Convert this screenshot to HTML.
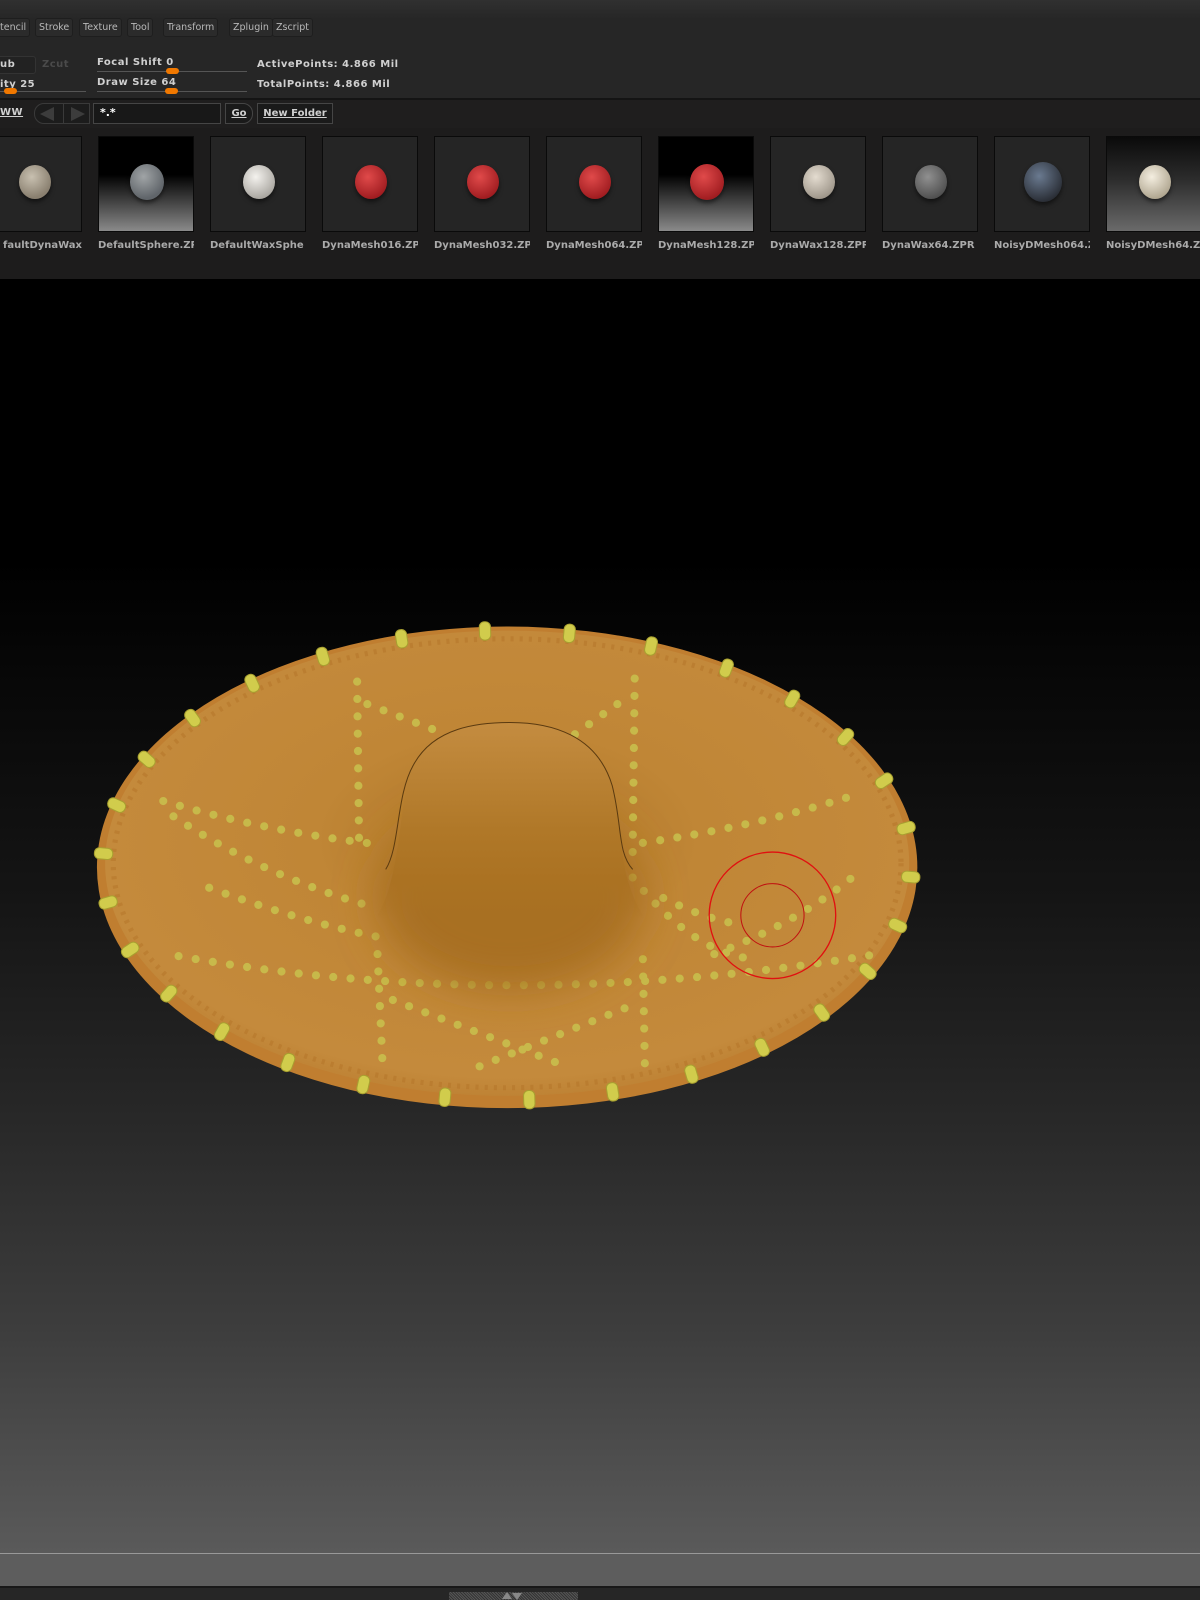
<!DOCTYPE html>
<html><head><meta charset="utf-8"><style>
*{margin:0;padding:0;box-sizing:border-box}
body{width:1200px;height:1600px;overflow:hidden;background:#000;font-family:"DejaVu Sans","Liberation Sans",sans-serif;position:relative}
.top{position:absolute;left:0;top:0;width:1200px;height:100px;background:linear-gradient(#303030,#262626 20%,#262626);border-bottom:2px solid #141414}
.menu{position:absolute;top:18px;height:19px;font-size:9.5px;color:#b8b8b8;background:#2b2b2b;border:1px solid #1e1e1e;border-radius:3px;padding:3px 3px;line-height:12px}
.lbl{position:absolute;font-size:10px;font-weight:bold;color:#d0d0d0;letter-spacing:.5px}
.slider{position:absolute;height:1px;background:#555}
.knob{position:absolute;width:13px;height:6px;background:#f07800;border-radius:3px}
.row2{position:absolute;left:0;top:100px;width:1200px;height:28px;background:#1f1e1e}
.btn{position:absolute;top:103px;height:21px;border:1px solid #454545;background:#1a1a1a;color:#cfcfcf;font-size:10px;font-weight:bold;line-height:19px;text-decoration:underline}
.thumbs{position:absolute;left:0;top:128px;width:1200px;height:151px;background:#1d1c1c}
.th{position:absolute;top:136px;width:96px;height:96px;border:1px solid #0a0a0a;background:#252525}
.th.g{background:linear-gradient(#000 40%,#8a8a8a)}
.th.g2{background:linear-gradient(#0a0a0a,#2c2c2c 45%,#6a6a6a)}
.ball{position:absolute;border-radius:50%}
.tl{position:absolute;top:240px;font-size:10px;font-weight:bold;color:#aaa;width:96px;overflow:hidden;white-space:nowrap;letter-spacing:0}
.vp{position:absolute;left:0;top:279px;width:1200px;height:1274px;background:linear-gradient(#000 0px,#000 280px,#151515 620px,#262626 820px,#3d3d3d 1050px,#5a5a5a 1274px)}
.bot{position:absolute;left:0;top:1553px;width:1200px;height:33px;background:#5d5d5d;border-top:1px solid #999}
.bar{position:absolute;left:0;top:1586px;width:1200px;height:14px;background:#262626;border-top:2px solid #181818}
</style></head><body>
<div class="top">
  <div class="menu" style="left:-4px">tencil</div>
  <div class="menu" style="left:35px">Stroke</div>
  <div class="menu" style="left:79px">Texture</div>
  <div class="menu" style="left:127px">Tool</div>
  <div class="menu" style="left:163px">Transform</div>
  <div class="menu" style="left:229px">Zplugin</div>
  <div class="menu" style="left:272px">Zscript</div>
  <div style="position:absolute;left:-4px;top:56px;width:40px;height:18px;border:1px solid #333;border-radius:3px;background:#222"></div>
  <div class="lbl" style="left:0;top:59px">ub</div>
  <div class="lbl" style="left:42px;top:59px;color:#4a4a4a">Zcut</div>
  <div class="lbl" style="left:0;top:79px">ity 25</div>
  <div class="slider" style="left:0;top:91px;width:86px"></div><div class="knob" style="left:4px;top:88px"></div>
  <div class="lbl" style="left:97px;top:57px">Focal Shift 0</div>
  <div class="slider" style="left:97px;top:71px;width:150px"></div><div class="knob" style="left:166px;top:68px"></div>
  <div class="lbl" style="left:97px;top:77px">Draw Size 64</div>
  <div class="slider" style="left:97px;top:91px;width:150px"></div><div class="knob" style="left:165px;top:88px"></div>
  <div class="lbl" style="left:257px;top:59px">ActivePoints: 4.866 Mil</div>
  <div class="lbl" style="left:257px;top:79px">TotalPoints: 4.866 Mil</div>
</div>
<div class="row2"></div>
<div class="lbl" style="left:0;top:107px;text-decoration:underline">WW</div>
<div style="position:absolute;left:34px;top:103px;width:56px;height:21px;border:1px solid #3a3a3a;border-radius:10px 0 0 10px;background:#1c1c1c"></div>
<div style="position:absolute;left:63px;top:103px;width:27px;height:21px;border:1px solid #3a3a3a;background:#1c1c1c"></div>
<div style="position:absolute;left:40px;top:107px;border-right:14px solid #3c3c3c;border-top:7px solid transparent;border-bottom:7px solid transparent"></div>
<div style="position:absolute;left:71px;top:107px;border-left:14px solid #3c3c3c;border-top:7px solid transparent;border-bottom:7px solid transparent"></div>
<div style="position:absolute;left:93px;top:103px;width:128px;height:21px;border:1px solid #454545;background:#181818;color:#fff;font-size:11px;font-weight:bold;padding:2px 6px">*.*</div>
<div class="btn" style="left:225px;width:28px;text-align:center;border-radius:0 10px 10px 0">Go</div>
<div class="btn" style="left:257px;width:76px;text-align:center">New Folder</div>
<div class="thumbs"></div>
<div id="th"></div>
<div class="vp"></div>
<svg style="position:absolute;left:0;top:0" width="1200" height="1600" viewBox="0 0 1176 1568">
<defs>
<radialGradient id="hat" cx="0.5" cy="0.45" r="0.6">
<stop offset="0" stop-color="#ad7526"/><stop offset="0.4" stop-color="#c08636"/><stop offset="0.85" stop-color="#c48a3c"/><stop offset="1" stop-color="#b87a2c"/>
</radialGradient>
<linearGradient id="dome" x1="0" y1="0" x2="0" y2="1">
<stop offset="0" stop-color="#c48c40"/><stop offset="0.55" stop-color="#b07828"/><stop offset="0.8" stop-color="#ab7222"/><stop offset="1" stop-color="#ab7222" stop-opacity="0"/>
</linearGradient>
<filter id="bl" x="-50%" y="-50%" width="200%" height="200%"><feGaussianBlur stdDeviation="20"/></filter>
</defs>
<ellipse cx="497" cy="850" rx="402" ry="236" fill="#c07e30"/>
<ellipse cx="497" cy="846" rx="394" ry="228" fill="url(#hat)"/>
<ellipse cx="497" cy="846" rx="386" ry="220" fill="none" stroke="#b47428" stroke-width="5" stroke-dasharray="3 6" opacity=".5"/>
<g fill="none" stroke="#c9c24e" stroke-width="8" stroke-linecap="round" stroke-dasharray="0 17" opacity=".85">
<path d="M350 668 L352 835"/>
<path d="M622 665 L620 835"/>
<path d="M360 690 L425 715"/>
<path d="M605 690 L560 722"/>
<path d="M160 785 Q260 815 375 828"/>
<path d="M630 826 Q740 810 835 780"/>
<path d="M170 800 Q260 860 370 890"/>
<path d="M205 870 Q300 905 380 920"/>
<path d="M175 937 Q500 995 860 935"/>
<path d="M370 935 L375 1045"/>
<path d="M630 940 L632 1045"/>
<path d="M385 980 L555 1045"/>
<path d="M470 1045 L620 985"/>
<path d="M650 880 Q690 900 720 905"/>
<path d="M700 935 Q780 905 835 860"/>
<path d="M620 860 Q680 935 740 940"/>
</g>
<ellipse cx="500" cy="880" rx="130" ry="90" fill="#a86f20" filter="url(#bl)"/>
<path d="M368 900 C395 860 390 780 405 750 C425 712 470 708 500 708 C540 708 585 720 600 770 C610 810 605 860 632 900 Z" fill="url(#dome)"/>
<path d="M378 852 C392 830 388 780 405 750 C425 712 470 708 500 708 C540 708 585 720 600 770 C610 810 605 835 620 852" fill="none" stroke="#5a3a10" stroke-width="1"/>
<g id="knobs" fill="#d1cc4c" stroke="#a8a030" stroke-width="1"></g>
<circle cx="757" cy="897" r="62" fill="none" stroke="#e01010" stroke-width="1.3"/>
<circle cx="757" cy="897" r="31" fill="none" stroke="#c01010" stroke-width="1"/>
</svg>
<div class="bot"></div>
<div class="bar"></div>
<div style="position:absolute;left:449px;top:1592px;width:129px;height:8px;background:repeating-linear-gradient(45deg,#555 0 1px,#333 1px 2px)"></div>
<div style="position:absolute;left:502px;top:1592px;border-bottom:7px solid #888;border-left:5px solid transparent;border-right:5px solid transparent"></div>
<div style="position:absolute;left:512px;top:1593px;border-top:7px solid #888;border-left:5px solid transparent;border-right:5px solid transparent"></div>
<script>
var th=[
["faultDynaWax","",'radial-gradient(circle at 40% 35%,#c8c0b0,#8a8070 70%)',32],
["DefaultSphere.ZPR","g",'radial-gradient(circle at 40% 35%,#a0a4a6,#60656a 70%)',34],
["DefaultWaxSphe","",'radial-gradient(circle at 40% 35%,#f4f2ee,#a9a6a0 75%)',32],
["DynaMesh016.ZPR","",'radial-gradient(circle at 40% 35%,#e04a4a,#a01c20 75%)',32],
["DynaMesh032.ZPR","",'radial-gradient(circle at 40% 35%,#e04a4a,#a01c20 75%)',32],
["DynaMesh064.ZPR","",'radial-gradient(circle at 40% 35%,#e04a4a,#a01c20 75%)',32],
["DynaMesh128.ZPR","g",'radial-gradient(circle at 40% 35%,#e04a4a,#a01c20 75%)',34],
["DynaWax128.ZPR","",'radial-gradient(circle at 40% 35%,#e4dcd0,#9e968a 75%)',32],
["DynaWax64.ZPR","",'radial-gradient(circle at 40% 35%,#909090,#505050 75%)',32],
["NoisyDMesh064.ZPR","",'radial-gradient(circle at 40% 35%,#6a7a90,#2a2e36 75%)',38],
["NoisyDMesh64.ZPR","g2",'radial-gradient(circle at 40% 35%,#f4eee0,#b0a690 75%)',32]];
var h='';
th.forEach(function(t,i){var x=-14+112*i;
h+='<div class="th '+t[1]+'" style="left:'+x+'px"><div class="ball" style="left:'+(48-t[3]/2)+'px;top:'+(44-t[3]/2)+'px;width:'+t[3]+'px;height:'+(t[3]+2)+'px;background:'+t[2]+';box-shadow:0 3px 4px rgba(0,0,0,.5)"></div></div>';
h+='<div class="tl" style="left:'+x+'px;'+(i==0?'text-align:right':'')+'">'+t[0]+'</div>';});
document.getElementById('th').innerHTML=h;
var g=document.getElementById('knobs'),s='';
for(var i=0;i<30;i++){var a=i/30*Math.PI*2+0.05;var cx=497+396*Math.cos(a),cy=848+230*Math.sin(a);
var ang=Math.atan2(230*Math.cos(a),-396*Math.sin(a))*180/Math.PI;
s+='<rect x="-5.5" y="-9" width="11" height="18" rx="5" transform="translate('+cx.toFixed(1)+' '+cy.toFixed(1)+') rotate('+ang.toFixed(1)+')"/>';}
g.innerHTML=s;
</script>
</body></html>
